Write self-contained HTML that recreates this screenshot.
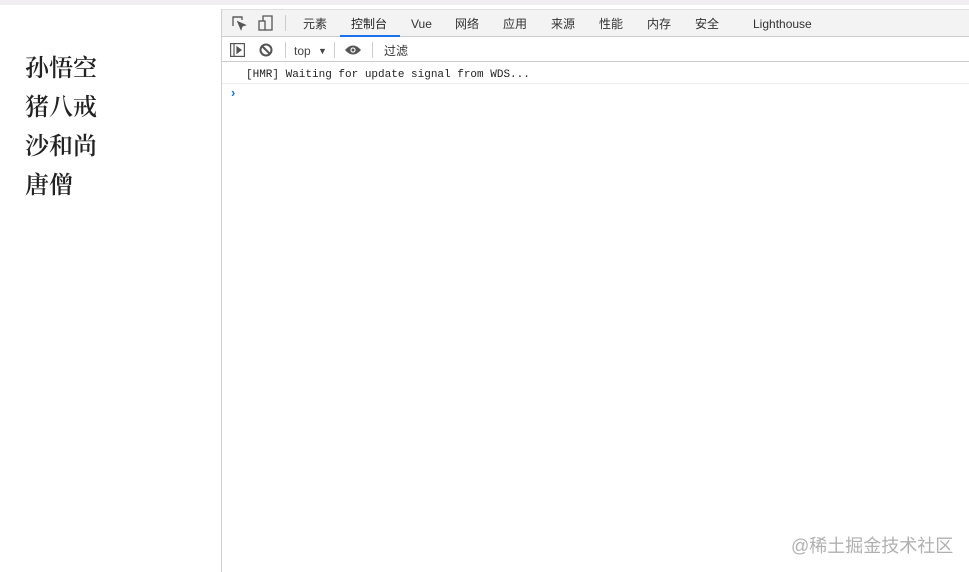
<!DOCTYPE html>
<html><head><meta charset="utf-8"><style>
*{margin:0;padding:0;box-sizing:border-box}
body{width:969px;height:572px;overflow:hidden;background:#fff;position:relative;font-family:"Liberation Sans","Noto Sans CJK SC",sans-serif}
.top{position:absolute;left:0;top:0;width:969px;height:5px;background:#f0eef0}
.names{position:absolute;left:25px;top:46px;font-family:"Noto Serif CJK SC",serif;font-weight:600;font-size:24px;line-height:39px;color:#222}
.dev{position:absolute;left:221px;top:9px;right:0;bottom:0;border-left:1px solid #d0d0d0}
.tabs{position:absolute;left:0;top:0;right:0;height:28px;background:#f3f3f3;border-top:1px solid #e0e0e0;border-bottom:1px solid #cbcbcb;font-size:12px;color:#333}
.tab,.tool span{position:absolute;top:7px;line-height:14px;height:14px}
.tool span{top:7px}
.tool{position:absolute;left:0;top:28px;right:0;height:25px;background:#fff;border-bottom:1px solid #cbcbcb;font-size:12px;color:#333}
.msg{position:absolute;left:24px;top:60px;font-family:"Liberation Mono",monospace;font-size:11px;color:#222}
.line{position:absolute;left:0;right:0;top:74px;border-top:1px solid #eee}
.wm{position:absolute;left:791px;top:535px;font-size:18px;line-height:22px;color:#b0b0b0}
</style></head><body>
<div class="top"></div>
<div class="names">孙悟空<br>猪八戒<br>沙和尚<br>唐僧</div>
<div class="dev">
 <div class="tabs">
  <svg style="position:absolute;left:9px;top:5px" width="16" height="16" viewBox="0 0 16 16" fill="none" stroke="#555" stroke-width="1.3"><path d="M2 11V2h9"/><path d="M2 2h9v3"/><path d="M7 7l7 3-3 1-1 3z" fill="#555"/></svg>
  <svg style="position:absolute;left:36px;top:5px" width="16" height="16" viewBox="0 0 16 16" fill="none" stroke="#555" stroke-width="1.3"><rect x="1" y="6" width="6" height="9"/><path d="M5 6V1h9v14H7"/></svg>
  <div style="position:absolute;left:63px;top:5px;width:1px;height:16px;background:#ccc"></div>
  <span class="tab" style="left:81px">元素</span>
  <span class="tab" style="left:129px;color:#222">控制台</span>
  <div style="position:absolute;left:118px;top:25px;width:60px;height:2px;background:#1a73e8"></div>
  <span class="tab" style="left:189px">Vue</span>
  <span class="tab" style="left:233px">网络</span>
  <span class="tab" style="left:281px">应用</span>
  <span class="tab" style="left:329px">来源</span>
  <span class="tab" style="left:377px">性能</span>
  <span class="tab" style="left:425px">内存</span>
  <span class="tab" style="left:473px">安全</span>
  <span class="tab" style="left:531px">Lighthouse</span>
 </div>
 <div class="tool">
  <svg style="position:absolute;left:8px;top:6px" width="15" height="14" viewBox="0 0 15 14" fill="none" stroke="#555" stroke-width="1.2"><rect x="0.6" y="0.6" width="13.8" height="12.8"/><path d="M4 1v12"/><path d="M7 4l4 3-4 3z" fill="#555"/></svg>
  <svg style="position:absolute;left:37px;top:6px" width="14" height="14" viewBox="0 0 14 14" fill="none" stroke="#555" stroke-width="2"><circle cx="7" cy="7" r="5.5"/><path d="M3 3l8 8"/></svg>
  <div style="position:absolute;left:63px;top:5px;width:1px;height:16px;background:#ccc"></div>
  <span style="left:72px;color:#444">top</span>
  <span style="left:96px;font-size:9px;color:#444">▼</span>
  <div style="position:absolute;left:112px;top:5px;width:1px;height:16px;background:#ccc"></div>
  <svg style="position:absolute;left:123px;top:7px" width="16" height="12" viewBox="0 0 16 12"><path d="M0 6Q8-3 16 6Q8 15 0 6z" fill="#555"/><circle cx="8" cy="6" r="2.6" fill="#fff"/><circle cx="8" cy="6" r="1.5" fill="#555"/></svg>
  <div style="position:absolute;left:150px;top:5px;width:1px;height:16px;background:#ccc"></div>
  <span style="left:162px;color:#333">过滤</span>
 </div>
 <div class="msg">[HMR] Waiting for update signal from WDS...</div>
 <div class="line"></div>
 <span style="position:absolute;left:9px;top:76px;color:#1a73e8;font-size:13px;font-weight:bold">›</span>
</div>
<div class="wm">@稀土掘金技术社区</div>
</body></html>
